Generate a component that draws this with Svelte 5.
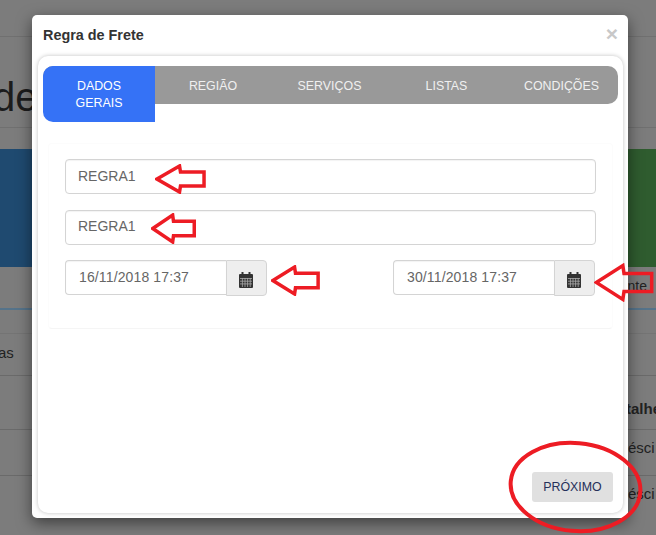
<script>
  const tabs = ['REGIÃO', 'SERVIÇOS', 'LISTAS', 'CONDIÇÕES'];
  const arrows = [
    { left: 155, top: 164, w: 51, h: 30 },
    { left: 151, top: 213, w: 45, h: 31 },
    { left: 271, top: 265, w: 49, h: 31 },
    { left: 594, top: 263, w: 60, h: 39 }
  ];
</script>

<div class="page">
  <div class="topbar"></div>
  <div class="heading"><span>de</span></div>
  <div class="bands">
    <div class="band blue"></div>
    <div class="band green"></div>
  </div>
  <div class="tabsrow"><span>nte</span></div>
  <div class="tablerow spacer"></div>
  <div class="tablerow first"><span>as</span></div>
  <div class="tablerow head"><b>talhe</b></div>
  <div class="tablerow r3"><span>résci</span></div>
  <div class="tablerow r4"><span>résci</span></div>

  <div class="modal">
    <header class="mhead">
      <h4>Regra de Frete</h4>
      <span class="close">×</span>
    </header>
    <div class="card">
      <nav class="tabs">
        <div class="tab active">DADOS<br />GERAIS</div>
        {#each tabs as t}
          <div class="tab">{t}</div>
        {/each}
      </nav>
      <div class="form">
        <div class="input full">REGRA1</div>
        <div class="input full">REGRA1</div>
        <div class="dates">
          {#each ['16/11/2018 17:37', '30/11/2018 17:37'] as d}
            <div class="group">
              <div class="input date">{d}</div>
              <div class="addon">
                <svg width="14" height="16" viewBox="0 0 14 16">
                  <rect x="0" y="2" width="14" height="14" rx="1" fill="#333" />
                  <rect x="2.5" y="0" width="2" height="4" fill="#333" />
                  <rect x="9.5" y="0" width="2" height="4" fill="#333" />
                  <path d="M1 6.5h12M1 9.2h12M1 11.9h12M3.4 6v9M6 6v9M8.6 6v9M11.2 6v9" stroke="#aaa" stroke-width=".8" fill="none" />
                </svg>
              </div>
            </div>
          {/each}
        </div>
      </div>
      <div class="foot"><button>PRÓXIMO</button></div>
    </div>
  </div>

  {#each arrows as a}
    <svg class="arrow" style="left:{a.left}px;top:{a.top}px;width:{a.w}px;height:{a.h}px" viewBox="0 0 52 30" preserveAspectRatio="none">
      <path d="M2 15 L25 2 L26 8 L50 8 L50 22 L26 22 L25 28 Z" fill="none" stroke="#ed1c24" stroke-width="3.5" vector-effect="non-scaling-stroke" />
    </svg>
  {/each}
  <svg class="ellipse" width="140" height="100" viewBox="0 0 140 100">
    <ellipse cx="70.5" cy="49" rx="65" ry="44" fill="none" stroke="#ed1c24" stroke-width="4" transform="rotate(5 70.5 49)" />
  </svg>
</div>

<style>
  :global(body) { margin: 0; background: #7c7c7c; }
  .page {
    position: relative; width: 656px; height: 535px; overflow: hidden;
    background: #7c7c7c; font-family: "Liberation Sans", Arial, sans-serif; color: #262626;
  }
  .topbar { height: 36px; border-bottom: 1px solid #707070; }
  .heading {
    height: 90px; border-bottom: 1px solid #707070; font-size: 40px; line-height: 120px;
    color: #1c1c1c; margin-left: -7px;
  }
  .bands { display: flex; height: 118px; margin-top: 21px; }
  .band.blue { flex: 1; background: #1f4a70; }
  .band.green { width: 120px; background: #2f5c2f; }
  .tabsrow {
    height: 41px; border-bottom: 2px solid #55738a; text-align: right; font-size: 14px;
    line-height: 39px; padding-right: 9px; color: #222;
  }
  .tablerow { border-bottom: 1px solid #6a6a6a; font-size: 15px; color: #222; white-space: nowrap; }
  .spacer { height: 23px; border-bottom-color: #747474; }
  .first { height: 41px; line-height: 38px; margin-left: -2px; }
  .head { height: 53px; line-height: 66px; padding-left: 626px; }
  .r3 { height: 45px; line-height: 36px; padding-left: 623px; }
  .r4 { height: 47px; line-height: 36px; padding-left: 623px; border: 0; }
  .modal {
    position: absolute; left: 32px; top: 15px; width: 596px; height: 503px; box-sizing: border-box;
    background: #fff; border-radius: 5px; box-shadow: 0 5px 15px rgba(0,0,0,.5);
    display: flex; flex-direction: column; padding: 0 5px 5px 6px;
  }
  .mhead { height: 41px; flex: none; display: flex; justify-content: space-between; align-items: flex-start; padding-left: 5px; padding-right: 5px; }
  h4 { margin: 12px 0 0; font-size: 14.4px; line-height: 16px; font-weight: 700; color: #333; }
  .close { font-size: 21px; line-height: 21px; margin-top: 8px; font-weight: 700; color: #c8c8c8; }
  .card {
    flex: 1; display: flex; flex-direction: column; position: relative;
    border-radius: 10px; box-shadow: 0 0 4px rgba(0,0,0,.25); background: #fff; padding: 10px 5px 0;
  }
  .tabs { display: flex; height: 38px; background: #999; border-radius: 10px; align-items: flex-start; }
  .tab { flex: 1; font-size: 12.4px; line-height: 17px; text-align: center; padding-top: 12px; color: #f0f0f0; }
  .tab:nth-child(2) { flex: none; width: 116px; }
  .tab:nth-child(3) { flex: none; width: 117px; }
  .tab:nth-child(4) { flex: none; width: 117px; }
  .tab.active {
    flex: none; width: 112px; height: 56px; box-sizing: border-box;
    background: #3572f6; color: #fff; border-radius: 10px 0 0 10px;
  }
  .form {
    margin: 39px 5px 0; padding: 15px 16px 32px; display: flex; flex-direction: column; gap: 16px;
    border: 1px solid #fcfcfc; border-bottom-color: #f5f5f5; border-radius: 4px;
  }
  .input {
    box-sizing: border-box; height: 35px; border: 1px solid #d4d4d4; border-radius: 4px; background: #fff;
    font-size: 14px; line-height: 33px; padding-left: 13px; color: #666;
    box-shadow: inset 0 1px 1px rgba(0,0,0,.05);
  }
  .input.full { padding-left: 12px; }
  .input.full:nth-child(2) { line-height: 31px; }
  .dates { display: flex; justify-content: space-between; margin-top: -1px; padding-right: 1px; }
  .group { display: flex; width: 202px; }
  .input.date { flex: 1; border-radius: 4px 0 0 4px; border-right: 0; letter-spacing: .13px; }
  .addon {
    width: 41px; height: 36px; box-sizing: border-box; border: 1px solid #d4d4d4; border-radius: 0 4px 4px 0; background: #eee;
    display: flex; align-items: center; justify-content: center; padding: 3px 2px 0 0;
  }
  .foot { margin-top: auto; padding: 0 5px 11px 0; display: flex; justify-content: flex-end; }
  button {
    width: 81px; height: 30px; border: 0; border-radius: 3px; background: #e0e0e0; padding: 0;
    font: 12.4px "Liberation Sans", Arial, sans-serif; color: #26305a;
  }
  .arrow { position: absolute; }
  .ellipse { position: absolute; left: 505px; top: 438px; }
</style>
